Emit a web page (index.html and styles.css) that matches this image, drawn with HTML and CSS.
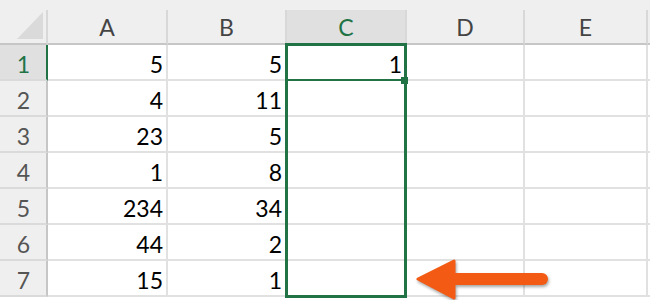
FILE: index.html
```html
<!doctype html>
<html lang="en">
<head>
  <meta charset="utf-8">
  <title>Sheet1</title>
  <meta name="viewport" content="width=device-width, initial-scale=1">
  <link rel="stylesheet" href="styles.css">
</head>
<body>
  <div class="sheet">
    <div class="strip"></div>

    <div class="grid">
      <!-- column headers -->
      <div class="corner">
        <svg width="26" height="27" viewBox="0 0 26 27"><polygon points="26,0 26,27 0,27" fill="#dadada"/></svg>
      </div>
      <div class="col-head">A</div>
      <div class="col-head">B</div>
      <div class="col-head active">C</div>
      <div class="col-head">D</div>
      <div class="col-head">E</div>
      <div class="col-head"></div>

      <div class="row-head active">1</div>
      <div class="cell">5</div><div class="cell">5</div><div class="cell">1</div><div class="cell"></div><div class="cell"></div><div class="cell"></div>

      <div class="row-head">2</div>
      <div class="cell">4</div><div class="cell">11</div><div class="cell"></div><div class="cell"></div><div class="cell"></div><div class="cell"></div>

      <div class="row-head">3</div>
      <div class="cell">23</div><div class="cell">5</div><div class="cell"></div><div class="cell"></div><div class="cell"></div><div class="cell"></div>

      <div class="row-head">4</div>
      <div class="cell">1</div><div class="cell">8</div><div class="cell"></div><div class="cell"></div><div class="cell"></div><div class="cell"></div>

      <div class="row-head">5</div>
      <div class="cell">234</div><div class="cell">34</div><div class="cell"></div><div class="cell"></div><div class="cell"></div><div class="cell"></div>

      <div class="row-head">6</div>
      <div class="cell">44</div><div class="cell">2</div><div class="cell"></div><div class="cell"></div><div class="cell"></div><div class="cell"></div>

      <div class="row-head">7</div>
      <div class="cell">15</div><div class="cell">1</div><div class="cell"></div><div class="cell"></div><div class="cell"></div><div class="cell"></div>
    </div>

    <!-- selected range C1:C7 -->
    <div class="selection"></div>
    <div class="active-edge"></div>
    <div class="fill-handle"></div>

    <svg class="arrow" width="150" height="50" viewBox="0 0 150 50">
      <g fill="#f35a14" stroke="#f35a14" stroke-linejoin="round">
        <polygon points="4,22 40,4 40,41" stroke-width="3"/>
        <line x1="36" y1="22" x2="128" y2="22" stroke-width="12" stroke-linecap="round"/>
      </g>
    </svg>
  </div>
</body>
</html>
```

FILE: styles.css
```css
:root{
  --head-bg:#efefef; --head-on:#e0e0e0; --head-line:#c6c6c6;
  --grid:#e1e1e1; --xl-green:#217346; --head-fg:#444;
}
html,body{margin:0;padding:0;background:#fff;overflow:hidden}
body{font-family:Lato,"Open Sans","Liberation Sans",sans-serif;color:#000}

.sheet{position:relative;width:650px;height:300px}
.strip{height:10px;background:var(--head-bg)}

.grid{
  display:grid;
  grid-template-columns:48px 120px 119px 120px 118px 123px 1fr;
  grid-template-rows:35px repeat(7,36px);
}
.grid>div{box-sizing:border-box}

.corner{
  background:var(--head-bg);border-right:2px solid #d8d8d8;
  border-bottom:2px solid var(--head-line);
  display:flex;align-items:flex-end;justify-content:flex-end;
  padding:0 3px 4px 0
}
.corner svg{display:block}

.col-head{
  background:var(--head-bg);color:var(--head-fg);
  border-right:2px solid #d8d8d8;border-bottom:2px solid var(--head-line);
  text-align:center;font-size:23px;line-height:30px;padding-top:2px
}
.col-head.active{background:var(--head-on);color:var(--xl-green)}

.row-head{
  background:var(--head-bg);color:#555;
  border-right:2px solid var(--head-line);border-bottom:2px solid #dadada;
  text-align:center;font-size:23px;line-height:32px;padding:3px 0 0 1px
}
.row-head.active{background:var(--head-on);color:var(--xl-green);border-right-color:var(--xl-green)}

.cell{
  border-right:2px solid var(--grid);border-bottom:2px solid var(--grid);
  text-align:right;font-size:23px;line-height:32px;padding:3px 3px 0 0
}

.selection{
  position:absolute;left:285px;top:43px;width:122px;height:255px;
  box-sizing:border-box;border:3px solid var(--xl-green)
}
.active-edge{
  position:absolute;left:285px;top:79px;width:122px;height:2px;background:var(--xl-green)
}
.fill-handle{
  position:absolute;left:401px;top:77px;width:7px;height:7px;background:var(--xl-green)
}

.arrow{
  position:absolute;left:414px;top:257px;
  filter:drop-shadow(1px 2px 1.5px rgba(0,0,0,.35))
}
```
